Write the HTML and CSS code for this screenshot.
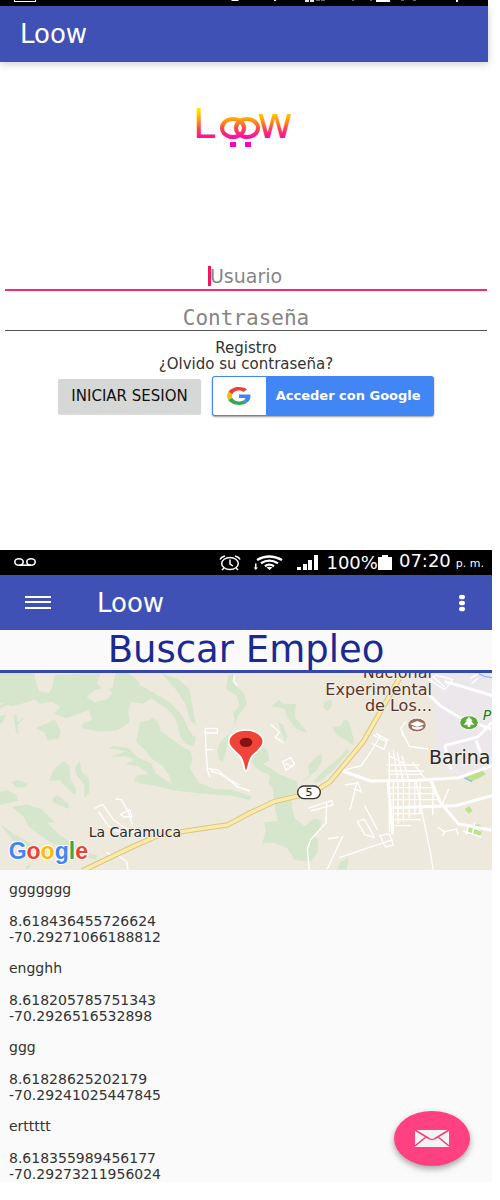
FILE: index.html
```html
<!DOCTYPE html>
<html lang="es">
<head>
<meta charset="utf-8">
<meta name="viewport" content="width=device-width, initial-scale=1">
<title>Loow</title>
<link rel="stylesheet" href="styles.css">
</head>
<body>
<section class="screen login">
  <div class="status-edge">
    <svg viewBox="0 0 488 6" width="100%" height="6" aria-hidden="true" fill="#fff">
      <path d="M14 0h1v1h20V0h1v2H14z"/><path d="M231 0h8l-1 1h-6zM274 0h2v1h-2zM376 0h14v2h-14zM456 0h2v2h-2z"/>
      <path d="M305 0h4v2h-4zM310 0h4v2h-4z" opacity=".9"/><path d="M316 0h4v1h-4zM321 0h4v1h-4zM352 0h2v1h-2zM370 0h2v1h-2zM401 0h3v1h-3zM413 0h3v1h-3z" opacity=".4"/>
    </svg>
  </div>
  <header class="toolbar toolbar-login"><h1 class="title">Loow</h1></header>
  <main class="login-main">
    <svg class="logo" viewBox="0 0 108 50" width="108" height="50" role="img" aria-label="Loow">
      <defs>
        <linearGradient id="sun" gradientUnits="userSpaceOnUse" x1="0" y1="10" x2="0" y2="38">
          <stop offset="0" stop-color="#ffe600"/><stop offset=".35" stop-color="#ff9d0a"/><stop offset=".7" stop-color="#fb3d5c"/><stop offset="1" stop-color="#ff0ca8"/>
        </linearGradient>
      </defs>
      <text class="logo-l" x="3" y="38" fill="url(#sun)">L</text>
      <g fill="none" stroke="url(#sun)" stroke-width="4">
        <ellipse cx="43" cy="28" rx="11" ry="9"/><ellipse cx="57" cy="28" rx="11" ry="9"/>
      </g>
      <text class="logo-w" x="67" y="38" fill="url(#sun)">w</text>
      <path d="M40 42h6v5h-6zM55 42h6v5h-6z" fill="#f807b4"/>
    </svg>
    <form class="form">
      <label class="field field-active"><input class="input" type="text" placeholder="Usuario" aria-label="Usuario"></label>
      <label class="field"><input class="input input-pass" type="password" placeholder="Contraseña" aria-label="Contraseña"></label>
      <nav class="links">
        <a href="#registro">Registro</a>
        <a href="#clave">¿Olvido su contraseña?</a>
      </nav>
      <div class="actions">
        <button class="btn" type="button">INICIAR SESION</button>
        <button class="google" type="button">
          <span class="google-mark">
            <svg viewBox="0 0 48 48" width="24" height="18" preserveAspectRatio="none" aria-hidden="true">
              <path fill="#ea4335" d="M24 9.5c3.54 0 6.71 1.22 9.21 3.6l6.85-6.85C35.9 2.38 30.47 0 24 0 14.62 0 6.51 5.38 2.56 13.22l7.98 6.19C12.43 13.72 17.74 9.5 24 9.5z"/>
              <path fill="#4285f4" d="M46.98 24.55c0-1.57-.15-3.09-.38-4.55H24v9.02h12.94c-.58 2.96-2.26 5.48-4.78 7.18l7.73 6c4.51-4.18 7.09-10.36 7.09-17.65z"/>
              <path fill="#fbbc05" d="M10.53 28.59c-.48-1.45-.76-2.99-.76-4.59s.27-3.14.76-4.59l-7.98-6.19C.92 16.46 0 20.12 0 24c0 3.88.92 7.54 2.56 10.78l7.97-6.19z"/>
              <path fill="#34a853" d="M24 48c6.48 0 11.93-2.13 15.89-5.81l-7.73-6c-2.15 1.45-4.92 2.3-8.16 2.3-6.26 0-11.57-4.22-13.47-9.91l-7.98 6.19C6.51 42.62 14.62 48 24 48z"/>
            </svg>
          </span>
          <span class="google-text">Acceder con Google</span>
        </button>
      </div>
    </form>
  </main>
</section>

<section class="screen search">
  <div class="status">
    <svg class="voicemail" width="22" height="9" viewBox="0 0 22 9" fill="none" stroke="#fff" stroke-width="1.6" aria-hidden="true"><ellipse cx="5" cy="4" rx="4.200" ry="3.200"/><ellipse cx="17" cy="4" rx="4.200" ry="3.200"/><path d="M5 7.200h12"/></svg>
    <svg width="22" height="16" viewBox="0 0 22 16" fill="none" stroke="#fff" stroke-width="1.5" aria-hidden="true"><ellipse cx="11" cy="8.500" rx="8.300" ry="6"/><path d="M11 4.500V9l3 2M1 4.500Q2 2 6 1M21 4.500Q20 2 16 1M5 13l-2 2M17 13l2 2"/></svg>
    <svg class="wifi" width="30" height="16" viewBox="0 0 30 16" aria-hidden="true"><g fill="none" stroke="#fff" stroke-width="2.400"><path d="M4 5Q16-2 29 5M8 8.200Q16 3 25 8.200M12 11.200Q16 8 21 11.200"/></g><path d="M13.500 12.500q3-1.500 6 0l-3 2.500zM2 8.500h1.500v4H5L2.800 15 .6 12.500H2z" fill="#fff"/></svg>
    <svg class="signal" width="22" height="16" viewBox="0 0 22 16" fill="#fff" aria-hidden="true"><path d="M0 12h4v3H0zM6 9h4v6H6zM11 5h4v10h-4zM17 0h4v15h-4z"/></svg>
    <span class="battery">100%<svg width="14" height="15" viewBox="0 0 14 15" fill="#fff" aria-hidden="true"><path d="M4 0h6v2h4v13H0V2h4z"/></svg></span>
    <span class="time">07:20 <small>p. m.</small></span>
  </div>
  <header class="toolbar toolbar-search">
    <button class="icon-btn" type="button" aria-label="Menú"><svg width="26" height="15" viewBox="0 0 26 15" fill="#fff"><path d="M0 1h26v2H0zM0 6h26v2H0zM0 12h26v2H0z"/></svg></button>
    <h2 class="title title-search">Loow</h2>
    <button class="icon-btn" type="button" aria-label="Más opciones"><svg width="8" height="18" viewBox="0 0 8 18" fill="#fff"><ellipse cx="4" cy="3" rx="3" ry="2.300"/><ellipse cx="4" cy="9" rx="3" ry="2.300"/><ellipse cx="4" cy="15" rx="3" ry="2.300"/></svg></button>
  </header>
  <h3 class="heading">Buscar Empleo</h3>
  <svg class="map" viewBox="0 24 1476 591" preserveAspectRatio="xMidYMid slice" role="img" aria-label="Mapa de La Caramuca y Barinas">
    <path fill="#eee9dd" d="M0 24h1476v591H0z"/>
    <path fill="#ebe7eb" d="M1230 24h246v290l-110 20-60-50-2-70-2-130-70-40z"/>
    <g fill="#d5e6cd">
      <path d="M0 24h104l4 26 26 8 20 18 10-46 140-6-14 30 20 22 28-8 8-44h36q30 14 42 42l32 32-28 18-36-6-8 30 6 32-38 24-52 4-22-4-32-6 2-14 28-12-10-30-34 14-32 12-38-14 20-20-26-16-36 6-16-12-44 14-26 6L0 112z"/>
      <path fill="#eee9dd" d="M260 96l26-22 40-6 10 18-14 16-38 10zM102 32l24-6 8 26 22 14-8 18-32-6z"/>
      <path d="M380 50l50 16 80 46 34 36 30 60 14 10-8 26-24-8-16-24-14-52-28-32-50-30-40-20zM484 24l50 18 34 30 8 44 12 66-18-18-14-48-26-40zM0 120l22-6 22-20-12 22-32 14zM0 152l18-4-6 18-12 12zM40 150l10 0 2 20 22-14-12 14-10 14 4 22-8-6z"/>
      <path d="M106 190l58-26 18 32-6 26-34 4-8-24zM190 288l18 14 4 42 18 30-6 16-22-20-22-24-34 2 14-32zM240 288l4 30 22 22 2 42-14 18-2-42-22-26-6-22zM34 352l14-6 38 8-12 12-24 2zM160 398l14-6 32 24 2 16-26-10-24-12zM0 380l20-4 28 12 6 20-54 12z"/>
      <path d="M420 172l30-8 6-8 18 14 8 28 52 38 36 22 8 24-10 26 26 44 50 20 50 2 60 20-4 12-54-14-88-6-90-10-60-16-36-4-20-10 8-14 38-6-34-22-38-6 26-14-22-10-44 2 40-18-50-8 14-8 46 8 28 28 40 16 12 30 50 34-8-26-20-28-34-24-20-26-26-22z"/>
      <path d="M36 426l46-8 42 14 40 40-22 2 36 36 36 22 40 30 38 8-4 14-46-14-36-22-44-10-40-26-36-28-16-30zM0 476l40 32 44 22 40 22-24 4-54-20zM74 606l20-10-10 18z"/>
      <path d="M684 32l14-8 8 38 26 22 8 34-26 34-8 26-18 26-8 50-12 36-10-4-6-30 8-26 24-20 20-34-4-34 18-20-8-30-32-20z"/>
      <path d="M814 124l22-18 18 12 34-2-4 40 34 40 2 8-30-12-28-34-8-26zM970 112l24-8 2 20-14 14-12-10zM996 186l26-4 10-18 14 4 14 50 2 24-26-18-26-14zM906 350l24-16-6-34 24-24 16-12 2 24-16 30-34 22zM938 352l34-36 50-42 20-24 4 12-48 56-42 34zM790 246l14 14 4 26-18 10 46 30 56 24 2 34-22 4 4 34 8 38 30 24 28-24 22 6-4 30-20 14 14 14-2 40-20 26-50-6-20-36-46-16-30 2 12-34-6-28 42-4-8-32-8-66-12-16 4-22-40-20-22-30z"/><path d="M1012 614l8-22 26-14-6 36z"/>
      <path d="M834 172l16 8 12 34-8 16z"/>
    </g>
    <path fill="#bfe18f" d="M1388 328l56-14 14 14-22 12-24 10zM1394 432l14-8 10 14-12 8zM1398 484l38-6 14 10-10 26-30-4z"/>
    <path fill="none" stroke="#8dbbf0" stroke-width="4" d="M1392 338l24 12M1430 24l24 10 22 4"/>
    <g fill="none" stroke="#fff" stroke-width="4">
      <path d="M614 190h38v14h-40M616 190l2 64h20M618 254l4 56 32 6 56 48 40 14M620 312l10 24M632 318l30 10 56 32M704 32l-4 16 12 14M346 402l18 2 20 34 14 44M362 448l26-14 8 20-24 2zM284 430l24-12 30 44 46 34 40 14M296 440l30 44 54 30M352 570l28 20 4 24M320 562l16 10"/>
      <path d="M812 178l26 24-12 16 26 16M848 290l24-12 12 20-26 18zM856 296l22 10M924 430l72-24 2 14-66 18M980 414l-2 60-46 50-10 30 6 60M982 612l46-98M984 522l32-6M1018 578l160-54M1094 422l38 72M1072 470l20-8 24 40 6 16-28-10zM1140 512l28-6 12 34-24 6zM1034 360l40-6 10 26-24-10M1050 434l22-84M1210 214l-8-24 16-20M1206 200l22 44 56 8M1028 316l56-14 34-50 24-42M1120 210l40 20-8 22-36-16M1128 206l38 20"/>
      <path d="M1168 260v240M1180 254l12 90M1192 262l18 90M1206 272l20 74M1238 292l36 48M1160 300h100M1162 318h110M1166 272l54 28M1168 328h96M1180 350v152M1194 350v126M1210 350v120M1228 350v110M1244 350v100M1260 350v96M1168 368h130M1170 386h135M1174 404h140M1180 446h90M1180 464h84M1182 482h52M1248 350l32 160 10 46 10 60M1300 350l-2 100M1346 372l-20 48M1312 486l22 14-6 12M1336 500l34-8 4 18M1394 478l50 20M1390 498l54 18M1406 480l-8 30M1424 474l-8 38M1288 44l20-14 50 14-24 30zM1300 36l34 30M1410 40l26-14M1414 56l20-16"/>
    </g>
    <g fill="none" stroke="#fff" stroke-width="9"><path d="M1028 318l84 30 140-2 124-8 100-36M1164 348l14 160M1176 428l190-6 110-30M1292 346l28 64 54 66 100 20M1334 242l100-26 42-44M1334 242l20 72M1334 50l52 14 90 28M1280 82l40 40 60 36 94 34M1428 226l26 68"/></g>
    <path fill="none" stroke="#dac487" stroke-width="16" d="M246 618l150-72 78-34 96-16 112-16 68-36 72-34 118-28 50-32 100-120 108-190"/>
    <path fill="none" stroke="#fbeba8" stroke-width="10" d="M246 618l150-72 78-34 96-16 112-16 68-36 72-34 118-28 50-32 100-120 108-190"/>
    <rect x="893" y="363" width="68" height="38" rx="19" fill="#fff" stroke="#333" stroke-width="4"/>
    <text class="map-text" x="927" y="394" font-size="33" text-anchor="middle">5</text>
    <path fill="#f04438" stroke="#fff" stroke-width="5" d="M738 318c-8 0-3-29-20-46-16-17-32-26-32-42 0-20 24-35 52-35s52 15 52 35c0 16-17 27-32 42-15 17-12 46-20 46z"/>
    <ellipse cx="738" cy="232" rx="19" ry="14" fill="#86120f"/>
    <ellipse cx="1251" cy="180" rx="28" ry="21" fill="#9b7060" stroke="#fff" stroke-width="3"/>
    <path fill="#fff" d="M1230 177l22-9 22 9-22 9zM1236 183q16 8 32 0v7q-16 8-32 0z"/>
    <ellipse cx="1407" cy="173" rx="28" ry="21" fill="#5bab35" stroke="#fff" stroke-width="3"/>
    <path fill="#fff" d="M1407 155l11 12h-5l10 12h-12v7h-8v-7h-12l10-12h-5z"/>
    <g class="map-text">
      <text x="266" y="515" font-size="42">La Caramuca</text>
      <text x="1287" y="297" font-size="57">Barina</text>
      <g class="map-brown" font-size="48" text-anchor="end"><text x="1296" y="38">Nacional</text><text x="1296" y="90">Experimental</text><text x="1296" y="138">de Los...</text></g>
      <text class="map-park" x="1448" y="165" font-size="42">P</text>
    </g>
    <text class="map-google" x="26" y="582"><tspan fill="#4285f4">G</tspan><tspan fill="#ea4335">o</tspan><tspan fill="#fbbc05">o</tspan><tspan fill="#4285f4">g</tspan><tspan fill="#34a853">l</tspan><tspan fill="#ea4335">e</tspan></text>
  </svg>
  <ul class="list">
    <li class="item"><p class="name">ggggggg</p><p>8.618436455726624</p><p>-70.29271066188812</p></li>
    <li class="item"><p class="name">engghh</p><p>8.618205785751343</p><p>-70.2926516532898</p></li>
    <li class="item"><p class="name">ggg</p><p>8.61828625202179</p><p>-70.29241025447845</p></li>
    <li class="item"><p class="name">erttttt</p><p>8.618355989456177</p><p>-70.29273211956024</p></li>
  </ul>
  <button class="fab" type="button" aria-label="Mensaje">
    <svg width="34" height="17" viewBox="0 0 34 17"><path fill="#f3f3f3" d="M0 0h34v17H0z"/><path fill="none" stroke="#f53b7a" stroke-width="1.500" d="M0 0l14 8.500q3 2 6 0L34 0M0 16l11-9M34 16L23 7"/></svg>
  </button>
</section>
</body>
</html>
```
FILE: styles.css
```css
* { box-sizing: border-box; }
body {
  margin: 0;
  background: #fff;
  color: #333;
  font-family: "DejaVu Sans", sans-serif;
  font-size: 14px;
  line-height: 16px;
}
h1, h2, h3, p, ul { margin: 0; padding: 0; font-weight: 400; }
a { color: inherit; text-decoration: none; }
button { border: 0; padding: 0; background: none; font-family: inherit; cursor: pointer; }
svg { display: block; }

.login { margin-right: 12px; }
.search { margin-right: 8px; position: relative; background: #fafafa; }

.status-edge { background: #000; }
.toolbar { display: flex; align-items: center; background: #3f51b5; color: #fff; }
.toolbar-login { height: 56px; padding: 0 20px; box-shadow: 0 2px 8px rgba(0, 0, 0, .2); }
.toolbar-search { height: 55px; padding: 0 26px 0 25px; }
.title { font-size: 26px; line-height: 28px; }
.title-search { flex: 1; padding-left: 46px; }
.icon-btn { display: flex; color: #fff; }

.login-main { padding: 38px 0 134px; }
.logo { margin: 0 auto; }
.logo-l { font-size: 40px; }
.logo-w { font-size: 44px; }
.form { margin-top: 113px; }
.field { display: block; position: relative; margin: 0 1px 13px 5px; border-bottom: 1px solid #555; }
.field-active { border-bottom: 2px solid #f62b6c; }
.field-active::before {
  content: "";
  position: absolute;
  left: calc(50% - 38px);
  top: 3px;
  width: 3px;
  height: 20px;
  background: #f5145f;
}
.input {
  display: block;
  width: 100%;
  height: 26px;
  padding: 0;
  border: 0;
  outline: 0;
  background: transparent;
  font-family: inherit;
  font-size: 19px;
  text-align: center;
}
.input::placeholder { color: #858585; opacity: 1; }
.input-pass { padding-top: 2px; font-family: "DejaVu Sans Mono", monospace; font-size: 21px; }
.links { display: flex; flex-direction: column; align-items: center; margin-top: -4px; font-size: 15px; padding-left: 4px; }
.actions { display: flex; justify-content: center; align-items: center; gap: 11px; margin-top: 4px; padding-left: 4px; }
.btn {
  height: 35px;
  padding: 0 13px;
  border-radius: 2px;
  background: #d6d7d7;
  box-shadow: 0 1px 1px rgba(0, 0, 0, .15);
  color: #111;
  font-size: 15px;
}
.google {
  display: flex;
  height: 40px;
  padding: 1px;
  border-radius: 3px;
  background: #4285f4;
  box-shadow: 0 1px 2px rgba(0, 0, 0, .4);
  color: #fff;
}
.google-mark { display: flex; align-items: center; justify-content: center; width: 53px; height: 38px; border-radius: 2px 0 0 2px; background: #fff; }
.google-text { padding: 0 12px 0 10px; font-size: 13px; font-weight: 700; line-height: 38px; }

.status { display: flex; align-items: center; height: 25px; padding: 0 8px 0 14px; background: #000; color: #fff; font-size: 18px; white-space: nowrap; }
.voicemail { margin-right: auto; }
.wifi { margin-left: 12px; }
.signal { margin: 0 7px 0 14px; }
.battery { display: flex; align-items: center; }
.time { display: flex; align-items: baseline; gap: 5px; margin-left: 7px; }
.time small { font-size: 11px; }
.heading { border-bottom: 3px solid #3547ac; color: #1a2a92; font-size: 37px; line-height: 40px; text-align: center; }
.map { width: 100%; overflow: hidden; }
.map-text { fill: #2a2a2a; stroke: #f4f0e8; stroke-width: 6px; paint-order: stroke; }
.map-brown { fill: #5b3428; }
.map-park { fill: #1c7a24; font-style: italic; }
.map-google { font-family: "Liberation Sans", sans-serif; font-size: 69px; font-weight: 700; stroke: #fff; stroke-width: 6px; paint-order: stroke; }
.list { padding: 11px 9px 0; list-style: none; }
.item { padding-bottom: 15px; }
.item:last-child { padding-bottom: 0; }
.name { margin-bottom: 16px; }
.fab {
  position: absolute;
  right: 22px;
  bottom: 16px;
  display: flex;
  align-items: center;
  justify-content: center;
  width: 76px;
  height: 55px;
  border-radius: 50%;
  background: #ff4081;
  box-shadow: 0 3px 6px rgba(0, 0, 0, .35);
}
```
